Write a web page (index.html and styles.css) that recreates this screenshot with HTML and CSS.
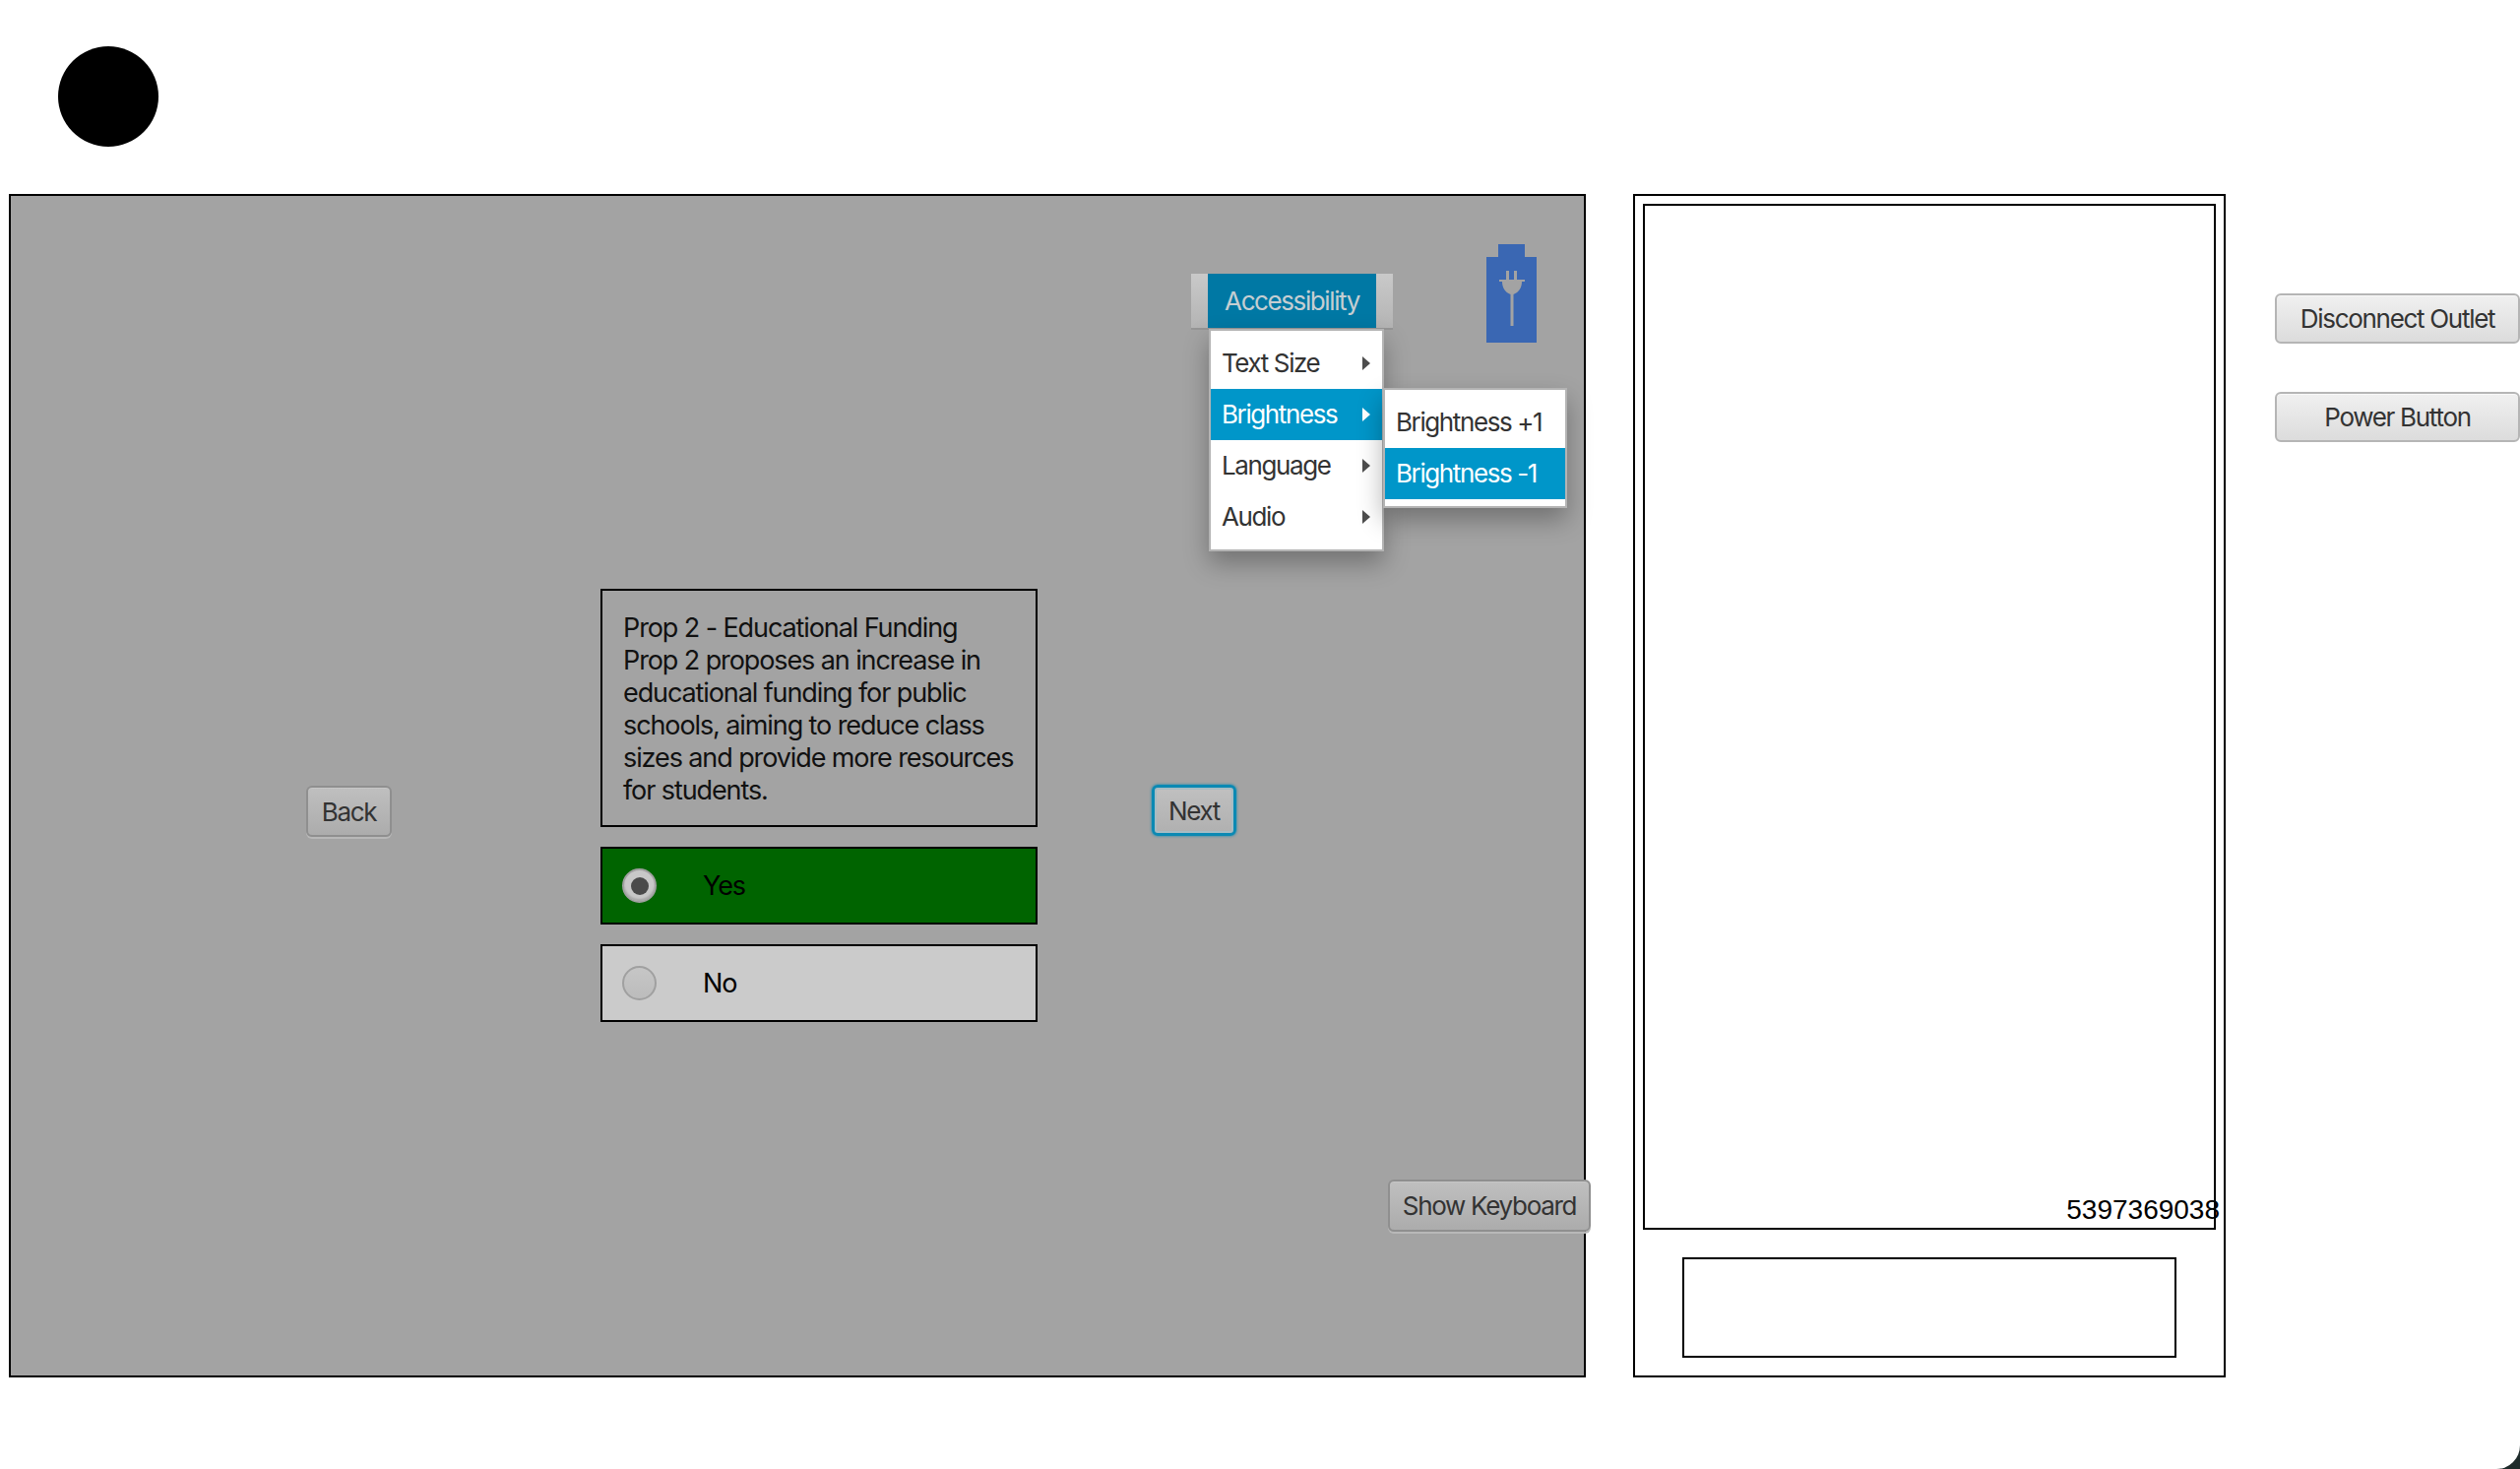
FILE: index.html
```html
<!DOCTYPE html>
<html lang="en">
<head>
    <meta charset="UTF-8">
    <meta name="viewport" content="width=device-width, initial-scale=1.0">
    <title>Voting Machine</title>
    <link rel="stylesheet" href="styles.css">
</head>
<body>
    <div class="window">
        <!-- Top indicator -->
        <div class="top-bar">
            <div class="indicator"></div>
        </div>

        <div class="main-row">
            <!-- Ballot screen -->
            <div class="screen">
                <div class="toolbar">
                    <div class="menu-bar">
                        <div class="menu-title">Accessibility</div>

                        <div class="menu main-menu">
                            <div class="menu-item">Text Size<span class="arrow"></span></div>
                            <div class="menu-item active">Brightness<span class="arrow"></span></div>
                            <div class="menu-item">Language<span class="arrow"></span></div>
                            <div class="menu-item">Audio<span class="arrow"></span></div>
                        </div>

                        <div class="menu sub-menu">
                            <div class="menu-item">Brightness +1</div>
                            <div class="menu-item active">Brightness -1</div>
                        </div>
                    </div>

                    <svg class="battery" viewBox="0 0 51 100" aria-label="Plugged in">
                        <path fill="#3a67b3" d="M12 0h27v13h12v87H0V13h12z"/>
                        <path fill="#a3a3a3" d="M20 27h3v9h5v-9h3v9h8v2h-3c0 6-3 11-8.500 13v32h-3V51c-5.500-2-8.500-7-8.500-13h-3v-2h7z"/>
                    </svg>
                </div>

                <div class="ballot-row">
                    <button class="btn btn-dark btn-back">Back</button>

                    <div class="ballot">
                        <div class="prop-text">
                            Prop 2 - Educational Funding<br>
                            Prop 2 proposes an increase in educational funding for public schools, aiming to reduce class sizes and provide more resources for students.
                        </div>
                        <div class="choice choice-selected">
                            <span class="radio radio-on"></span>
                            <span>Yes</span>
                        </div>
                        <div class="choice">
                            <span class="radio"></span>
                            <span>No</span>
                        </div>
                    </div>

                    <button class="btn btn-next">Next</button>
                </div>

                <div class="keyboard-row">
                    <button class="btn btn-dark btn-keyboard">Show Keyboard</button>
                </div>
            </div>

            <!-- Printer panel -->
            <div class="printer">
                <div class="paper">
                    <span class="paper-number">5397369038</span>
                </div>
                <div class="slot"></div>
            </div>

            <!-- Side controls -->
            <div class="side-controls">
                <button class="btn btn-light">Disconnect Outlet</button>
                <button class="btn btn-light">Power Button</button>
            </div>
        </div>
    </div>
</body>
</html>
```

FILE: styles.css
```css
html, body {
    margin: 0;
    height: 100%;
    background-color: #1f2b2b;
}

body {
    overflow: hidden;
    font-family: "Inter", "Liberation Sans", sans-serif;
}

.window {
    height: 100%;
    box-sizing: border-box;
    background-color: #ffffff;
    border-bottom-right-radius: 24px;
    padding-left: 9px;
}

.top-bar {
    height: 197px;
    padding-left: 50px;
    padding-top: 47px;
    box-sizing: border-box;
}

.indicator {
    width: 102px;
    height: 102px;
    border-radius: 50%;
    background-color: #000000;
}

.main-row {
    display: flex;
    align-items: flex-start;
}

/* Ballot screen */
.screen {
    width: 1602px;
    height: 1202px;
    box-sizing: border-box;
    border: 2px solid #000000;
    background-color: #a3a3a3;
}

.toolbar {
    display: flex;
    align-items: flex-start;
    padding-top: 49px;
    padding-left: 1199px;
    height: 399px;
    box-sizing: border-box;
}

.menu-bar {
    position: relative;
    width: 205px;
    height: 55px;
    margin-top: 30px;
    background: linear-gradient(#c9c9c9, #b4b4b4);
    box-shadow: 0 2px 0 #969696;
}

.menu-title {
    margin-left: 17px;
    width: 171px;
    height: 55px;
    line-height: 55px;
    text-align: center;
    background-color: #0078a4;
    color: #c5ced2;
    font-size: 26px;
    letter-spacing: -1.4px;
}

.menu {
    position: absolute;
    background-color: #ffffff;
    border: 2px solid #b4b4b4;
    padding: 7px 0;
    box-shadow: 0 12px 24px rgba(0, 0, 0, 0.3);
    box-sizing: border-box;
}

.main-menu {
    left: 18px;
    top: 56px;
    width: 178px;
    height: 226px;
}

.sub-menu {
    left: 195px;
    top: 116px;
    width: 187px;
    height: 122px;
}

.menu-item {
    position: relative;
    height: 52px;
    line-height: 52px;
    padding-left: 11px;
    color: #333333;
    font-size: 26px;
    letter-spacing: -1.4px;
}

.menu-item.active {
    background-color: #0096c9;
    color: #ffffff;
}

.arrow {
    position: absolute;
    right: 12px;
    top: 18.5px;
    border-left: 8px solid #4d4d4d;
    border-top: 7.5px solid transparent;
    border-bottom: 7.5px solid transparent;
}

.active .arrow {
    border-left-color: #ffffff;
}

.battery {
    width: 51px;
    height: 100px;
    margin-left: 95px;
}

.ballot-row {
    height: 600px;
    box-sizing: border-box;
    padding-left: 300px;
    display: flex;
    align-items: flex-start;
}

.ballot {
    margin-left: 212px;
    margin-right: 116px;
    width: 444px;
    flex-shrink: 0;
    display: flex;
    flex-direction: column;
    gap: 20px;
}

.prop-text {
    height: 242px;
    box-sizing: border-box;
    border: 2px solid #000000;
    padding: 21px 10px 0 21px;
    color: #111111;
    font-size: 27px;
    line-height: 33px;
    letter-spacing: -1.1px;
}

.choice {
    height: 79px;
    box-sizing: border-box;
    border: 2px solid #000000;
    background-color: #cbcbcb;
    display: flex;
    align-items: center;
    padding-left: 20px;
    gap: 47px;
    color: #000000;
    font-size: 27px;
    letter-spacing: -1.1px;
}

.choice-selected {
    background-color: #006400;
}

.radio {
    width: 35px;
    height: 35px;
    box-sizing: border-box;
    border-radius: 50%;
    border: 2px solid #a0a0a0;
    background: linear-gradient(#c6c6c6, #bcbcbc);
    display: flex;
    align-items: center;
    justify-content: center;
}

.radio-on {
    background: #c8c8c8;
    box-shadow: inset 0 -2px 2px #a8a8a8;
}

.radio-on::after {
    content: "";
    width: 18px;
    height: 18px;
    border-radius: 50%;
    background-color: #4a4a4a;
}

.btn {
    box-sizing: border-box;
    flex-shrink: 0;
    border-radius: 6px;
    font-family: inherit;
    font-size: 26px;
    letter-spacing: -1.3px;
    color: #333333;
    padding: 0;
    height: 52px;
}

.btn-dark {
    border: 2px solid #8f8f8f;
    background: linear-gradient(#bfbfbf, #acacac);
    box-shadow: inset 0 1px 0 #c6c6c6, 0 2px 0 #b8b8b8;
}

.btn-back {
    margin-top: 200px;
    width: 87px;
}

.btn-next {
    margin-top: 199px;
    width: 86px;
    border: 3px solid #0b89b3;
    background: linear-gradient(#c0c0c0, #b0b0b0);
    box-shadow: inset 0 0 0 2px #a6bcc4, 0 0 3px #0b89b3;
}

.keyboard-row {
    display: flex;
    justify-content: flex-end;
    margin-right: -7px;
}

.btn-keyboard {
    width: 206px;
    height: 53px;
}

/* Printer panel */
.printer {
    width: 602px;
    height: 1202px;
    margin-left: 48px;
    box-sizing: border-box;
    border: 2px solid #000000;
    padding: 8px 8px 0;
}

.paper {
    position: relative;
    width: 582px;
    height: 1042px;
    box-sizing: border-box;
    border: 2px solid #000000;
}

.paper-number {
    position: absolute;
    right: -6px;
    bottom: 2px;
    color: #000000;
    font-family: "Liberation Sans", sans-serif;
    font-size: 28px;
}

.slot {
    width: 502px;
    height: 102px;
    box-sizing: border-box;
    border: 2px solid #000000;
    margin: 28px 0 0 40px;
}

/* Side controls */
.side-controls {
    display: flex;
    flex-direction: column;
    gap: 49px;
    margin-left: 50px;
    padding-top: 101px;
    width: 249px;
}

.btn-light {
    width: 249px;
    height: 51px;
    border: 2px solid #b5b5b5;
    background: linear-gradient(#f0f0f0, #dcdcdc);
    box-shadow: inset 0 1px 0 #f8f8f8;
}
```
